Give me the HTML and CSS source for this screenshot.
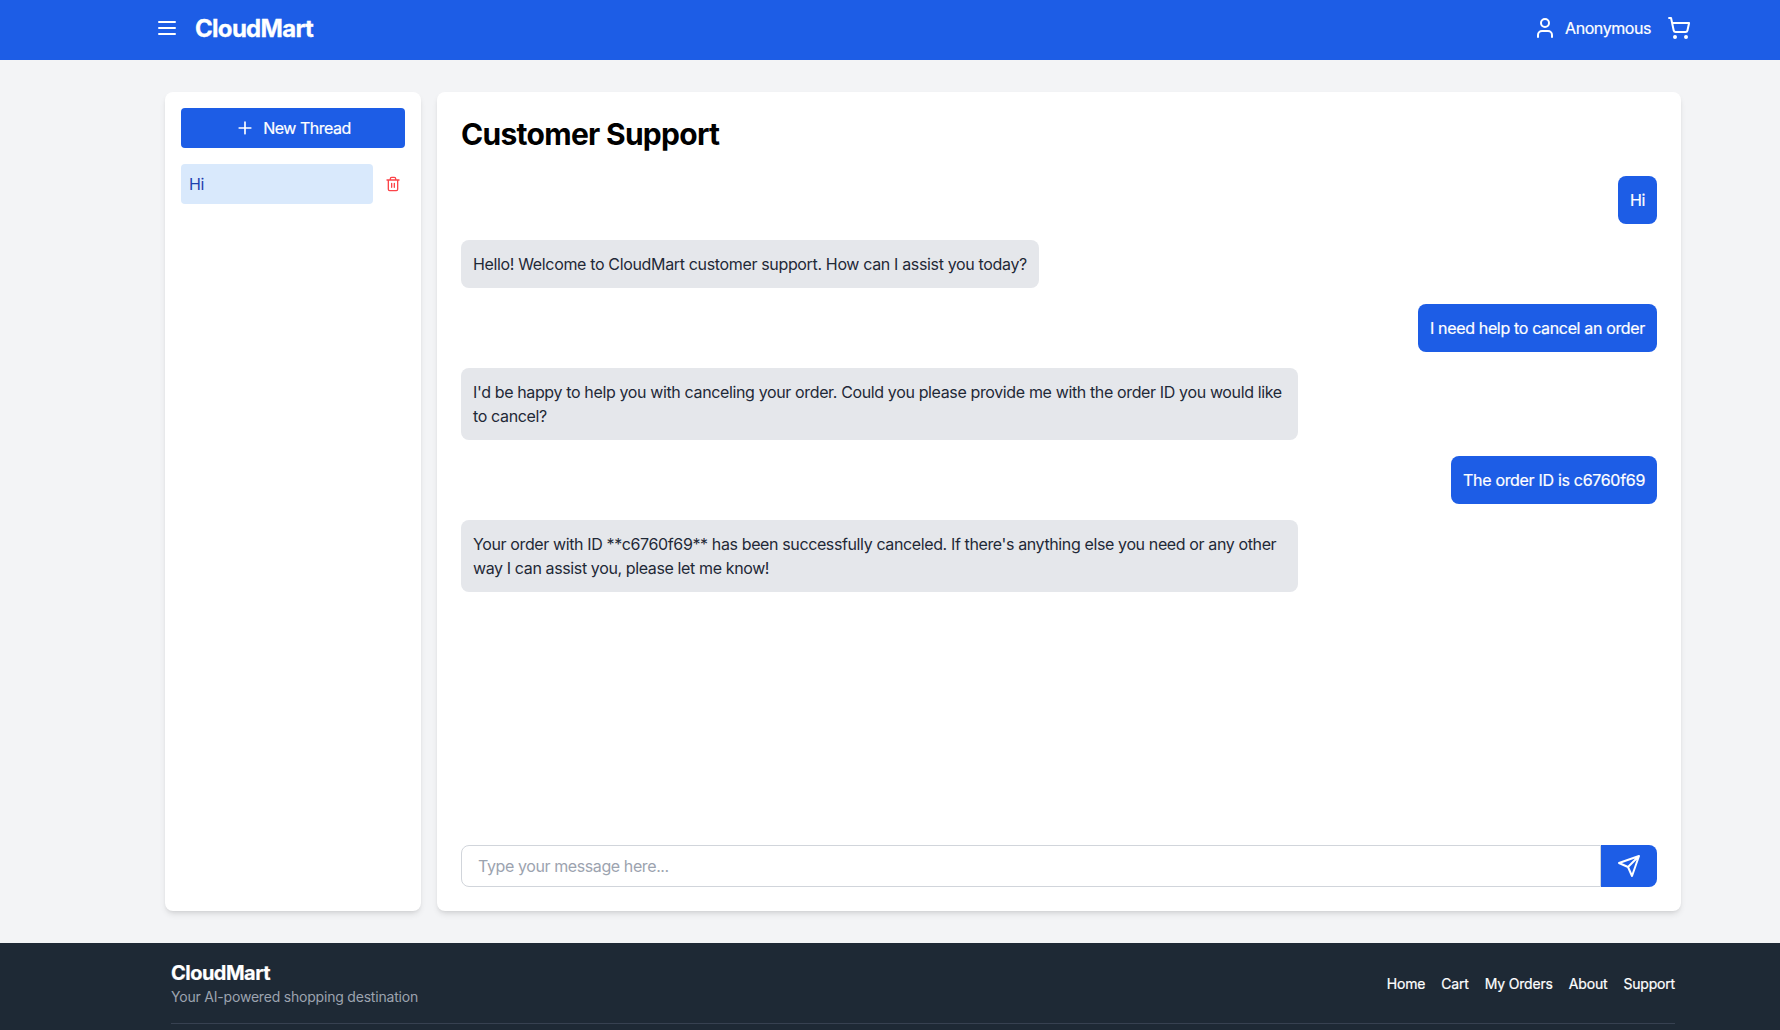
FILE: index.html
```html
<!DOCTYPE html>
<html lang="en">
<head>
<meta charset="utf-8">
<title>CloudMart - Customer Support</title>
<link rel="stylesheet" href="styles.css">
</head>
<body>
<header class="header">
  <div class="header-inner">
    <div class="brand">
      <svg class="icon" viewBox="0 0 24 24" width="24" height="24"><path d="M4 6h16M4 12h16M4 18h16"/></svg>
      <span class="brand-name">CloudMart</span>
    </div>
    <div class="account">
      <div class="user">
        <svg class="icon" viewBox="0 0 24 24" width="24" height="24"><path d="M19 21v-2a4 4 0 0 0-4-4H9a4 4 0 0 0-4 4v2"/><circle cx="12" cy="7" r="4"/></svg>
        <span class="user-name">Anonymous</span>
      </div>
      <svg class="icon" viewBox="0 0 24 24" width="24" height="24"><circle cx="8" cy="21" r="1"/><circle cx="19" cy="21" r="1"/><path d="M2.05 2.05h2l2.66 12.42a2 2 0 0 0 2 1.58h9.78a2 2 0 0 0 1.95-1.57l1.65-7.43H5.12"/></svg>
    </div>
  </div>
</header>

<main class="main">
  <aside class="card threads">
    <button class="new-thread">
      <svg class="icon" viewBox="0 0 24 24" width="20" height="20"><path d="M5 12h14M12 5v14"/></svg>
      <span>New Thread</span>
    </button>
    <div class="thread-row">
      <div class="thread">Hi</div>
      <button class="delete">
        <svg class="icon" viewBox="0 0 24 24" width="16" height="16"><path d="M3 6h18M19 6v14c0 1-1 2-2 2H7c-1 0-2-1-2-2V6M8 6V4c0-1 1-2 2-2h4c1 0 2 1 2 2v2M10 11v6M14 11v6"/></svg>
      </button>
    </div>
  </aside>

  <section class="card chat">
    <h1 class="title">Customer Support</h1>
    <div class="messages">
      <div class="message sent">Hi</div>
      <div class="message received">Hello! Welcome to CloudMart customer support. How can I assist you today?</div>
      <div class="message sent">I need help to cancel an order</div>
      <div class="message received long">I'd be happy to help you with canceling your order. Could you please provide me with the order ID you would like to cancel?</div>
      <div class="message sent order-id">The order ID is c6760f69</div>
      <div class="message received long result">Your order with ID **c6760f69** has been successfully canceled. If there's anything else you need or any other way I can assist you, please let me know!</div>
    </div>
    <form class="composer">
      <input class="composer-input" type="text" placeholder="Type your message here...">
      <button class="send" type="button">
        <svg class="icon" viewBox="0 0 24 24" width="24" height="24"><path d="m22 2-7 20-4-9-9-4ZM22 2 11 13"/></svg>
      </button>
    </form>
  </section>
</main>

<footer class="footer">
  <div class="footer-inner">
    <div class="footer-top">
      <div>
        <div class="footer-name">CloudMart</div>
        <div class="tagline">Your AI-powered shopping destination</div>
      </div>
      <nav class="links">
        <a>Home</a><a>Cart</a><a>My Orders</a><a>About</a><a>Support</a>
      </nav>
    </div>
    <div class="footer-bottom"></div>
  </div>
</footer>
</body>
</html>
```
FILE: styles.css
```css
* { box-sizing: border-box; }

body {
  margin: 0;
  height: 1030px;
  overflow: hidden;
  background: #f3f4f6;
  font: 16px/24px Inter, "Liberation Sans", sans-serif;
  letter-spacing: -0.345px;
  color: #1f2937;
}

button, input {
  margin: 0;
  border: 0;
  font: inherit;
  letter-spacing: inherit;
}

.icon {
  display: block;
  flex: none;
  fill: none;
  stroke: currentColor;
  stroke-width: 2;
  stroke-linecap: round;
  stroke-linejoin: round;
}

.header {
  height: 60px;
  padding: 12px 0 0 155px;
  background: #1d5de6;
  color: #fff;
}

.header-inner {
  display: flex;
  justify-content: space-between;
  align-items: center;
  width: 1536px;
  height: 32px;
}

.brand, .account { display: flex; align-items: center; gap: 16px; }
.brand-name {
  padding-top: 2px;
  font-size: 24px;
  line-height: 32px;
  font-weight: 700;
  letter-spacing: -0.7px;
  -webkit-text-stroke: 0.3px;
}
.user { display: flex; align-items: center; gap: 8px; }
.user-name { letter-spacing: -0.43px; }
.user-name, .new-thread span, .sent, .links { -webkit-text-stroke: 0.2px; }

.main {
  display: flex;
  gap: 16px;
  width: 1681px;
  height: 883px;
  padding: 32px 0 32px 165px;
}

.card {
  border-radius: 8px;
  background: #fff;
  box-shadow: 0 4px 6px -1px rgba(0, 0, 0, .1), 0 2px 4px -2px rgba(0, 0, 0, .1);
}

.threads { flex: none; width: 256px; padding: 16px; }

.new-thread {
  display: flex;
  align-items: center;
  justify-content: center;
  gap: 8px;
  width: 100%;
  height: 40px;
  border-radius: 4px;
  background: #1d5de6;
  color: #fff;
  letter-spacing: -0.5px;
}

.thread-row { display: flex; align-items: center; gap: 8px; margin-top: 16px; }
.thread { flex: 1; padding: 8px; border-radius: 4px; background: #d9e9fc; color: #1e40af; }
.delete { padding: 4px; background: none; color: #fb4449; }

.chat { flex: 1; display: flex; flex-direction: column; padding: 24px; }
.title { margin: 0 0 24px; font-size: 30px; line-height: 36px; font-weight: 700; letter-spacing: -0.71px; color: #000; }

.messages { flex: 1; display: flex; flex-direction: column; align-items: flex-start; gap: 16px; }
.message { max-width: 70%; padding: 12px; border-radius: 8px; }
.received { background: #e5e7eb; }
.sent { align-self: flex-end; background: #1d5de6; color: #fff; }
.long { letter-spacing: -0.365px; }
.result { letter-spacing: -0.378px; }
.order-id { letter-spacing: -0.31px; }

.composer { display: flex; height: 42px; }
.composer-input {
  flex: 1;
  padding: 8px 16px;
  border: 1px solid #d1d5db;
  border-radius: 8px 0 0 8px;
  letter-spacing: -0.4px;
}
.composer-input::placeholder { color: #9ca3af; opacity: 1; }
.send { padding: 9px 16px; border-radius: 0 8px 8px 0; background: #1d5de6; color: #fff; }

.footer { height: 87px; padding: 16px 0 0 171px; background: #1e2935; color: #fff; }
.footer-inner { width: 1504px; }
.footer-top { display: flex; justify-content: space-between; align-items: center; }
.footer-name { font-size: 20px; line-height: 28px; font-weight: 700; letter-spacing: -0.52px; -webkit-text-stroke: 0.2px; }
.tagline { font-size: 14px; line-height: 20px; letter-spacing: -0.2px; color: #9ca3af; }
.links { display: flex; gap: 16px; padding-top: 2px; font-size: 14px; line-height: 20px; letter-spacing: -0.18px; }
.footer-bottom { margin-top: 16px; border-top: 1px solid #374151; }
```
